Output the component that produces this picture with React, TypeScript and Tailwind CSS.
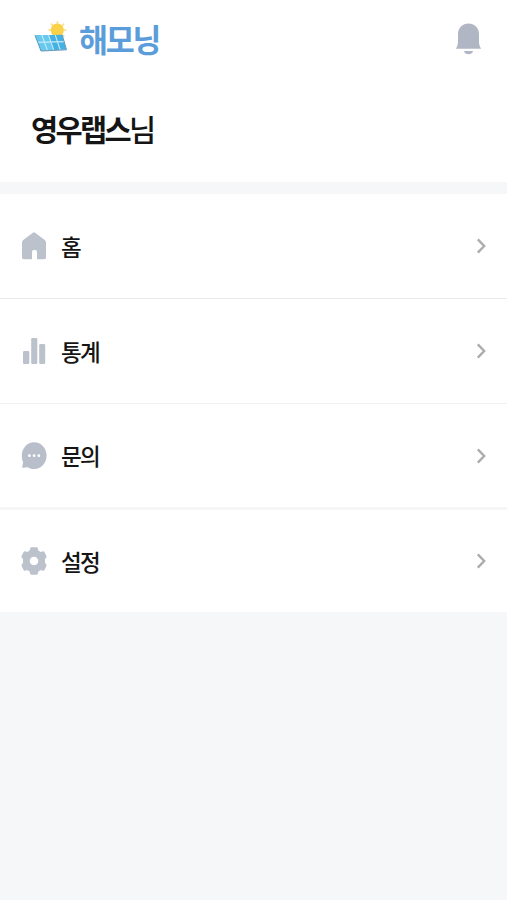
import React from "react";

type MenuEntry = {
  label: string;
  icon: React.ReactNode;
  row: string;
};

const SolarLogo = () => (
  <svg className="mb-1.5" width="34" height="32" viewBox="0 0 34 32" fill="none">
    <g stroke="#fadf96" strokeWidth="1.8" strokeLinecap="round">
      <path d="M23.4 2v1M17.4 4.2l.8.8M29.6 4.2l-.8.8M15.2 10h1M31.6 10.2h-1M29.8 16.2l-.8-.8" />
    </g>
    <circle cx="23.3" cy="10" r="6.6" fill="#fbd14a" />
    <path d="M1 15.2L28 14.8L32.4 29.6L7 30.8Z" fill="#45b0e3" />
    <path d="M1 15.2L14.5 15L19.5 30.2L7 30.8Z" fill="#68c9ee" />
    <path
      d="M7.8 15L13.4 30.4M14.5 14.9L19.8 30.2M21.2 14.8L26.2 30M3.8 22.4L30.4 21.6"
      stroke="#c3eafa"
      strokeWidth="1.1"
    />
    <path d="M1 15.2L7 31L32.5 29.8L28.2 14.8" stroke="#6598b8" strokeWidth="1" />
  </svg>
);

const BellIcon = () => (
  <svg width="27" height="32" viewBox="0 0 27 32" fill="#b1b6c4">
    <path d="M3 11.2C3 5 7.6 .6 13.5 .6S24 5 24 11.2V18.5C24 21.5 24.8 23.5 26 25.8H1C2.2 23.5 3 21.5 3 18.5Z" />
    <path d="M8.9 28H18.1C17.4 30.2 15.8 31.2 13.5 31.2S9.6 30.2 8.9 28Z" />
  </svg>
);

const HomeIcon = () => (
  <svg width="28" height="28" viewBox="0 0 28 28" fill="#bcc2cb">
    <path d="M12.9.7Q14 0 15.1.7L24.8 8Q26 9 26 10.5V25.5Q26 27.3 24.2 27.3H17V20Q17 18 15.5 18H13.6Q12 18 12 20V27.3H3.8Q2 27.3 2 25.5V10.5Q2 9 3.2 8Z" />
  </svg>
);

const StatsIcon = () => (
  <svg width="28" height="28" viewBox="0 0 28 28" fill="#bcc2cb">
    <rect x="3" y="14" width="6.3" height="13" rx="1.2" />
    <rect x="11.2" y="1" width="6.1" height="26" rx="1.2" />
    <rect x="19.2" y="7" width="6" height="20" rx="1.2" />
  </svg>
);

const ChatIcon = () => (
  <svg width="28" height="28" viewBox="0 0 28 28" fill="#b9bfca">
    <path d="M14.2.2C21.3.2 26.6 6.2 26.6 13.6S21.3 27.1 14.2 27.1C11.8 27.1 9.6 26.4 7.8 25.2L3 25.7Q1.4 25.6 2.3 24L3.2 20.6C2.2 18.5 1.8 16.1 1.8 13.6C1.8 6.2 7.1.2 14.2.2Z" />
    <g fill="#fff">
      <circle cx="9.4" cy="13.7" r="1.4" />
      <circle cx="14.1" cy="13.7" r="1.4" />
      <circle cx="18.8" cy="13.7" r="1.4" />
    </g>
  </svg>
);

const GearIcon = () => (
  <svg width="28" height="28" viewBox="0 0 28 28" fill="#bcc2cb">
    <path
      fillRule="evenodd"
      d="M11 .9H17L18 4.1L20.4 5.5L23.6 4.8L26 9.6L24.4 12.2V15.8L26 18.4L23.6 23.2L20.4 22.5L18 23.9L17 27.1H11L10 23.9L7.6 22.5L4.4 23.2L2 18.4L3.6 15.8V12.2L2 9.6L4.4 4.8L7.6 5.5L10 4.1ZM14 9.1A4.9 4.9 0 1 0 14 18.9A4.9 4.9 0 1 0 14 9.1Z"
      stroke="#bcc2cb"
      strokeWidth="1.2"
      strokeLinejoin="round"
    />
  </svg>
);

const ChevronIcon = () => (
  <svg width="12" height="18" viewBox="0 0 12 18" fill="none">
    <path d="M2.8 2.3L9.2 9L2.8 15.7" stroke="#acacac" strokeWidth="2.4" />
  </svg>
);

const menu: MenuEntry[] = [
  { label: "홈", icon: <HomeIcon />, row: "h-[105px] border-b border-[#e9e9ea]" },
  { label: "통계", icon: <StatsIcon />, row: "h-[105px] border-b border-[#f0f0f1]" },
  { label: "문의", icon: <ChatIcon />, row: "h-[106px] border-b-3 border-[#f6f6f7]" },
  { label: "설정", icon: <GearIcon />, row: "h-[102px]" },
];

const MenuRow: React.FC<{ entry: MenuEntry }> = ({ entry }) => (
  <li className={`flex items-center bg-white px-5 ${entry.row}`}>
    <span className="shrink-0">{entry.icon}</span>
    <span className="mb-px ml-[13px] flex-1 text-[22.5px] font-medium leading-8 tracking-[-0.075em] text-[#151515]">
      {entry.label}
    </span>
    <ChevronIcon />
  </li>
);

export default function App() {
  return (
    <div className="min-h-screen w-full bg-[#f6f7f9] font-['Noto_Sans_CJK_KR',sans-serif]">
      <header className="h-[182px] bg-white">
        <div className="flex h-[78px] items-center justify-between pl-[34px] pr-[25px]">
          <div className="flex items-center">
            <SolarLogo />
            <h1 className="mb-0.5 ml-[11px] text-[31.5px] font-bold leading-10 tracking-[-0.07em] text-[#5b9ddb]">
              해모닝
            </h1>
          </div>
          <BellIcon />
        </div>
        <p className="mt-[30px] pl-[31px] text-[29.5px] leading-10 tracking-[-0.09em] text-[#151515]">
          <span className="font-bold">영우랩스</span>
          <span className="font-medium">님</span>
        </p>
      </header>
      <ul className="mt-3">
        {menu.map((entry) => (
          <MenuRow key={entry.label} entry={entry} />
        ))}
      </ul>
    </div>
  );
}
